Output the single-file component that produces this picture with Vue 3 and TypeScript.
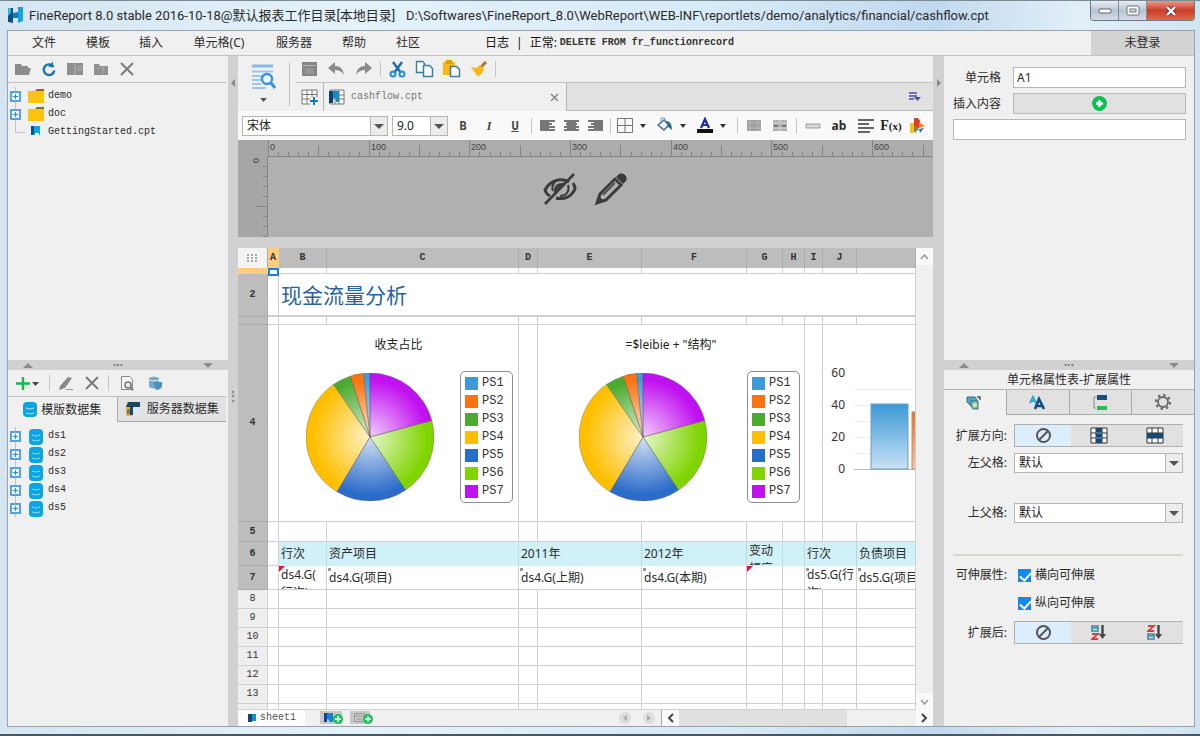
<script setup lang="ts">
import { computed, onBeforeUnmount, onMounted, ref } from 'vue'

interface Slice { name: string; color: string; from: number; to: number }

const menus: { label: string; width: number }[] = [
  { label: '文件', width: 54 },
  { label: '模板', width: 54 },
  { label: '插入', width: 52 },
  { label: '单元格(C)', width: 84 },
  { label: '服务器', width: 66 },
  { label: '帮助', width: 54 },
  { label: '社区', width: 54 },
]
const files = [
  { name: 'demo', folder: true },
  { name: 'doc', folder: true },
  { name: 'GettingStarted.cpt', folder: false },
]
const datasets = ['ds1', 'ds2', 'ds3', 'ds4', 'ds5']

const slices: Slice[] = [
  { name: 'PS1', color: '#3f9bd8', from: 354, to: 360 },
  { name: 'PS2', color: '#fd7311', from: 342, to: 354 },
  { name: 'PS3', color: '#4cab2f', from: 325, to: 342 },
  { name: 'PS4', color: '#ffbf00', from: 211, to: 325 },
  { name: 'PS5', color: '#2c6cc9', from: 146, to: 211 },
  { name: 'PS6', color: '#80d400', from: 75, to: 146 },
  { name: 'PS7', color: '#c011f0', from: 0, to: 75 },
]
function arc(s: Slice): string {
  const p = (deg: number) => {
    const a = (deg * Math.PI) / 180
    return `${(64 + 64 * Math.sin(a)).toFixed(2)} ${(64 - 64 * Math.cos(a)).toFixed(2)}`
  }
  return `M64 64L${p(s.from)}A64 64 0 0 1 ${p(s.to)}Z`
}

// The ruler carries only the ticks that fit in its current width.
const rulerEl = ref<HTMLElement | null>(null)
const rulerWidth = ref(660)
let observer: ResizeObserver | undefined
onMounted(() => {
  observer = new ResizeObserver(([entry]) => { rulerWidth.value = entry.contentRect.width })
  if (rulerEl.value) observer.observe(rulerEl.value)
})
onBeforeUnmount(() => observer?.disconnect())
const ticks = computed(() => {
  const list: { n: number; x: number; label: boolean }[] = []
  for (let n = 0; n * 1.007 < rulerWidth.value; n += 10) {
    const x = Math.round(n * 1.007)
    list.push({ n, x, label: n % 100 === 0 && x + 24 < rulerWidth.value })
  }
  return list
})
const sideTicks = Array.from({ length: 8 }, (_, i) => ({ n: (i + 1) * 10, y: (i + 1) * 10 }))
const columns = ['A', 'B', 'C', 'D', 'E', 'F', 'G', 'H', 'I', 'J', '']
const plainRows = ['8', '9', '10', '11', '12', '13', '']
const charts = [
  { title: '收支占比', span: 2, id: 'a' },
  { title: '=$leibie + "结构"', span: 4, id: 'b' },
]

const fontName = ref('宋体')
const fontSize = ref('9.0')
const cellName = ref('A1')
const cellText = ref('')
const leftParent = ref('默认')
const topParent = ref('默认')
const stretchX = ref(true)
const stretchY = ref(true)
const direction = ref(0)
const afterExpand = ref(0)
</script>

<template>
  <div class="window">
    <header class="titlebar">
      <svg class="logo" width="17" height="17" viewBox="0 0 17 17"><path d="M1 1h5v15l-5-1z" fill="#0e4f86" /><path d="M6 6l5-1v6H6z" fill="#1679bd" /><path d="M11 0h5v14l-5 2z" fill="#14a3dc" /><path d="M1 1h3v5l-3 3z" fill="#2bb5e6" /></svg>
      <h1>FineReport 8.0 stable 2016-10-18@默认报表工作目录[本地目录]</h1>
      <span class="path">D:\Softwares\FineReport_8.0\WebReport\WEB-INF\reportlets/demo/analytics/financial/cashflow.cpt</span>
      <div class="winbtns">
        <button aria-label="最小化"><svg width="14" height="8"><rect x="1" y="2" width="12" height="4" rx="1" fill="#fff" stroke="#5c6370" /></svg></button>
        <button aria-label="最大化"><svg width="14" height="12"><rect x="1" y="1" width="12" height="9" rx="1" fill="#fff" stroke="#6a7280" /><rect x="4" y="4" width="6" height="3" fill="#d5dbe4" stroke="#6a7280" /></svg></button>
        <button class="close" aria-label="关闭"><svg width="12" height="10" viewBox="0 0 12 10"><path d="M2 1l8 8M10 1L2 9" stroke="#6b3030" stroke-width="4" /><path d="M2 1l8 8M10 1L2 9" stroke="#fff" stroke-width="2.4" /></svg></button>
      </div>
    </header>

    <div class="frame">
      <nav class="menubar">
        <button v-for="m in menus" :key="m.label" :style="{ width: m.width + 'px' }">{{ m.label }}</button>
        <p class="log"><span>日志</span><span>|</span><span>正常:</span><code>DELETE FROM fr_functionrecord</code></p>
        <button class="login">未登录</button>
      </nav>

      <div class="body">
        <aside class="left">
          <section class="pane upper">
            <div class="tools">
              <button aria-label="打开"><svg width="18" height="14"><path d="M1 2h6l1 2h6v2h3l-2 7H1z" fill="#8b8b8b" /></svg></button>
              <button aria-label="刷新"><svg width="16" height="16" viewBox="0 0 16 16"><path d="M12.600 6A5.300 5.300 0 1 0 13.300 9.500" fill="none" stroke="#1a75b5" stroke-width="2.400" /><path d="M7 5.500l5-5v6z" fill="#1a75b5" /></svg></button>
              <button aria-label="新建"><svg width="18" height="14"><path d="M1 1h16v12H1z" fill="#8f8f8f" /><path d="M9 1v12M11 5h5M11 8h5" stroke="#b5b5b5" /></svg></button>
              <button aria-label="重命名"><svg width="16" height="14"><path d="M1 2h5l1 2h8v9H1z" fill="#909090" /><path d="M4 6h8M10 4v8" stroke="#aaa" /></svg></button>
              <button aria-label="删除"><svg width="14" height="14"><path d="M1 1l12 12M13 1L1 13" stroke="#7b7b7b" stroke-width="2" /></svg></button>
            </div>
            <ul class="tree">
              <li v-for="f in files" :key="f.name" :class="{ leaf: !f.folder }">
                <span class="knob"><svg v-if="f.folder" width="11" height="11"><rect x="1" y="1" width="9" height="9" fill="#e8f3fd" stroke="#58a2e2" stroke-width="2" /><path d="M3 5.500h5M5.500 3v5" stroke="#3b86cc" /></svg></span>
                <svg v-if="f.folder" width="17" height="15"><path d="M0 2h7l2-1h7v13H0z" fill="#ffc20e" /><path d="M7 2l2-2h7v2z" fill="#8a6a2c" /></svg>
                <svg v-else width="17" height="14"><path d="M3 1h9v9H3z" fill="#0fa5df" /><path d="M3 1h3v8l-3 1z" fill="#0b4d8c" /><path d="M7 8h4v3H7z" fill="#fff" /></svg>
                <span class="nm">{{ f.name }}</span>
              </li>
            </ul>
          </section>
          <div class="hsplit"><i class="up"></i><b>···</b><i class="dn"></i></div>
          <section class="pane lower">
            <div class="tools small">
              <button class="add" aria-label="添加"><svg width="26" height="15"><path d="M8 1v13M1 7.500h14" stroke="#18b84c" stroke-width="2.400" /><path d="M17 6h7l-3.500 4z" fill="#444" /></svg></button>
              <i class="sep"></i>
              <button aria-label="编辑"><svg width="16" height="15"><path d="M2 10L10 1l4 1-7 10-6 2z" fill="#8a8a8a" /><path d="M8 13.500h7" stroke="#999" /></svg></button>
              <button aria-label="删除"><svg width="14" height="14"><path d="M1 1l12 12M13 1L1 13" stroke="#7b7b7b" stroke-width="2" /></svg></button>
              <i class="sep"></i>
              <button class="wide" aria-label="预览"><svg width="15" height="16"><path d="M1.500 1.500h8l3 3v10h-11z" fill="#f6f6f6" stroke="#8a8a8a" /><circle cx="8" cy="10" r="3" fill="#eee" stroke="#777" stroke-width="1.500" /><path d="M10 12l3 3" stroke="#777" stroke-width="2" /></svg></button>
              <button aria-label="连接"><svg width="15" height="16"><path d="M1 3q5-3 10 0v9q-5 3-10 0z" fill="#78a8c8" /><path d="M1 5q5 2 10 0" stroke="#dceaf2" fill="none" /><path d="M5 7h9v5q-2 3-6 3z" fill="#4a90c4" /></svg></button>
            </div>
            <div class="dtabs">
              <button class="on"><svg width="14" height="17"><rect x="0" y="1" width="14" height="15" rx="4" fill="#0aa5e2" /><path d="M3 7q4 2 8 0M3 12q4 2 8 0" stroke="#b5e5f8" fill="none" /></svg>模版数据集</button>
              <button><svg width="18" height="16"><path d="M1 4h6v11H1z" fill="#e9b51c" /><path d="M3 1h12v5H8v8H5V6H1z" fill="#1d4766" /><path d="M9 7h6v7H9z" fill="#dce8f0" /><path d="M2 8h3v5H2z" fill="#777" /></svg>服务器数据集</button>
            </div>
            <ul class="tree ds">
              <li v-for="d in datasets" :key="d">
                <span class="knob"><svg width="11" height="11"><rect x="1" y="1" width="9" height="9" fill="#e8f3fd" stroke="#58a2e2" stroke-width="2" /><path d="M3 5.500h5M5.500 3v5" stroke="#3b86cc" /></svg></span>
                <svg width="17" height="17"><rect x="1" y="1" width="14" height="16" rx="4" fill="#0aa5e2" /><path d="M4 7q4 2 8 0M4 12q4 2 8 0" stroke="#8fdcf7" fill="none" /></svg>
                <span class="nm">{{ d }}</span>
              </li>
            </ul>
          </section>
        </aside>

        <div class="vsplit"><svg width="6" height="8"><path d="M5 0v8L1 4z" fill="#8a8a8a" /></svg><b>⋮</b></div>

        <main class="center">
          <div class="topbar">
            <button class="preview" aria-label="分页预览">
              <svg width="26" height="26"><path d="M1 2h21" stroke="#88b8e4" stroke-width="3" /><path d="M1 7.500h21M1 12h11M1 16h9M1 20h9M1 24h14" stroke="#9cc5ea" stroke-width="2" /><circle cx="16" cy="15" r="5" fill="#eaf5fe" stroke="#3a94dc" stroke-width="2.400" /><path d="M20 19l4 5" stroke="#3a94dc" stroke-width="3" /></svg>
              <svg width="9" height="6"><path d="M1 1h7L4.500 5z" fill="#555" /></svg>
            </button>
            <i class="tall"></i>
            <div class="toprows">
              <div class="icons">
                <button aria-label="保存"><svg width="17" height="16"><path d="M1 1h15v14H1z" fill="#858585" /><path d="M2 4.500h13" stroke="#b6b6b6" /><path d="M4 7h9v6H4z" fill="#959595" /></svg></button>
                <button aria-label="撤销"><svg width="17" height="14"><path d="M7 0v4q8 0 9 9-3-5-9-5v4L0 6z" fill="#8a8a8a" /></svg></button>
                <button aria-label="重做"><svg width="17" height="14"><path d="M10 0v4q-8 0-9 9 3-5 9-5v4l7-6z" fill="#8a8a8a" /></svg></button>
                <i class="sep"></i>
                <button aria-label="剪切"><svg width="17" height="17"><path d="M4 1l8 11M13 1L5 12" stroke="#1c6ea6" stroke-width="2.400" /><circle cx="4" cy="13" r="2.500" fill="none" stroke="#2a8dcc" stroke-width="2" /><circle cx="13" cy="13" r="2.500" fill="none" stroke="#2a8dcc" stroke-width="2" /></svg></button>
                <button aria-label="复制"><svg width="19" height="18"><path d="M1.500 1.500h6l2 2v9h-8z" fill="#f4f9fb" stroke="#3e7f9c" stroke-width="1.400" /><path d="M8.500 5.500h6l3 3v8h-9z" fill="#f8fcfd" stroke="#3e7f9c" stroke-width="1.500" /></svg></button>
                <button aria-label="粘贴"><svg width="19" height="18"><path d="M1 2h12v13H1z" fill="#fbb617" /><path d="M4 0h6v4H4z" fill="#e19a10" /><path d="M8.500 6.500h6l3 3v7h-9z" fill="#f8fcfd" stroke="#3e7f9c" stroke-width="1.500" /></svg></button>
                <button aria-label="格式刷"><svg width="18" height="17"><path d="M16 1l-6 6" stroke="#b0762c" stroke-width="3" /><path d="M1 6l5 1 4-3 4 4-2 4-4 4z" fill="#fbb617" /></svg></button>
                <i class="sep"></i>
              </div>
              <div class="files">
                <button class="new" aria-label="新建报表"><svg width="18" height="17"><path d="M1 1h15v14H1zM1 5.500h15M1 10h15M6 1v14M11 1v14" fill="#fff" stroke="#777" /><path d="M9 8h9v9H9z" fill="#f0f0f0" /><path d="M13 8v8M9 12h8" stroke="#0e7cb9" stroke-width="2" /></svg></button>
                <div class="ftab">
                  <svg width="16" height="16"><path d="M1 1h14v14H1zM1 6h14M1 10h14M6 1v14M10 1v14" fill="#fff" stroke="#777" /><path d="M0 2h10v11H7V9H4v5H0z" fill="#0f8ec8" /><path d="M0 2h4v12H0z" fill="#0b4272" /></svg>
                  <span>cashflow.cpt</span>
                  <button aria-label="关闭标签"><svg width="9" height="9"><path d="M1 1l7 7M8 1L1 8" stroke="#888" stroke-width="1.500" /></svg></button>
                </div>
                <div class="rest"><button aria-label="标签列表"><svg width="14" height="11"><path d="M1 1h8v2H1zM1 4h8v2H1zM1 7h5v2H1z" fill="#6e70b8" /><path d="M6 6h7l-3.500 4z" fill="#4d4fa5" /></svg></button></div>
              </div>
            </div>
          </div>

          <div class="format">
            <span class="sel font"><select v-model="fontName" aria-label="字体"><option>宋体</option></select><i></i></span>
            <span class="sel size"><select v-model="fontSize" aria-label="字号"><option>9.0</option></select><i></i></span>
            <button class="ltr" aria-label="加粗"><b>B</b></button>
            <button class="ltr it" aria-label="斜体"><b>I</b></button>
            <button class="ltr un" aria-label="下划线"><b>U</b></button>
            <i class="sep"></i>
            <button class="al" aria-label="左对齐"><svg width="17" height="14"><path d="M1 2h15M1 5h12M1 8h15M1 11h15" stroke="#777" stroke-width="2" /><path d="M1 1h9v11H1z" fill="#777" /></svg></button>
            <button class="al" aria-label="居中"><svg width="17" height="14"><path d="M1 2h15M3 5h11M1 8h15M1 11h15" stroke="#777" stroke-width="2" /><path d="M4 1h9v11H4z" fill="#777" /></svg></button>
            <button class="al" aria-label="右对齐"><svg width="17" height="14"><path d="M1 2h15M4 5h12M1 8h15M1 11h15" stroke="#777" stroke-width="2" /><path d="M7 1h9v11H7z" fill="#777" /></svg></button>
            <i class="sep"></i>
            <button class="dd" aria-label="边框"><svg width="36" height="17"><path d="M1.500 1.500h15v14h-15zM9 1.500v14M1.500 8.500h15" fill="none" stroke="#777" /><path d="M24 7h6l-3 4z" fill="#333" /></svg></button>
            <button class="dd" aria-label="背景色"><svg width="36" height="17"><path d="M2 8l6-5 5 5-5 5z" fill="#e8f1f6" stroke="#4c6d80" stroke-width="1.500" /><path d="M5 5V1h4v3" stroke="#7c98a6" fill="none" /><path d="M10 4q6 0 6 9l-4-3z" fill="#2b6a97" /><path d="M24 7h6l-3 4z" fill="#333" /></svg></button>
            <button class="dd" aria-label="字体颜色"><svg width="36" height="17"><path d="M5 11L9 2l4 9M6 8h6" fill="none" stroke="#1c2f9b" stroke-width="2.200" /><path d="M1 12h16v4H1z" fill="#111" /><path d="M24 7h6l-3 4z" fill="#333" /></svg></button>
            <i class="sep"></i>
            <button aria-label="合并"><svg width="16" height="13"><path d="M1 1h14v11H1z" fill="#a0a0a0" /><path d="M4 1v11M12 1v11M1 4h14M1 9h14" stroke="#b8b8b8" /></svg></button>
            <button aria-label="取消合并"><svg width="16" height="13"><path d="M1 1h14v11H1z" fill="#b2b2b2" /><path d="M1 4h14M1 9h14M8 1v3M8 9v3" stroke="#d5d5d5" /><path d="M2 6h4v2H2zM10 6h4v2h-4z" fill="#777" /></svg></button>
            <i class="sep"></i>
            <button aria-label="文本框"><svg width="16" height="6"><path d="M1 1h14v4H1z" fill="#d8d8d8" stroke="#a0a0a0" /></svg></button>
            <button class="ab" aria-label="文本">ab</button>
            <button aria-label="富文本"><svg width="17" height="16"><path d="M1 2h16M1 6h11M1 10h16M1 14h12" stroke="#666" stroke-width="2" /></svg></button>
            <button class="fx" aria-label="公式">F<small>(x)</small></button>
            <button aria-label="图表"><svg width="17" height="17"><path d="M1 6h4v10H1z" fill="#f6c31c" /><path d="M5 1h4l2 3v6l-6 5z" fill="#df3a2c" /><path d="M6 9l4 3-4 4z" fill="#57a93a" /><path d="M10 5l6 4-6 2z" fill="#f28a1c" /><path d="M10 12l5-1-4 5z" fill="#4664b4" /></svg></button>
          </div>

          <section class="ruler">
            <div ref="rulerEl" class="rtop"><svg width="100%" height="17">
              <g v-for="t in ticks" :key="t.n">
                <path :d="`M${t.x}.5 ${t.n % 100 === 0 ? 0 : t.n % 50 === 0 ? 5 : 12}V16`" stroke="#858585" />
                <text v-if="t.label" :x="t.x + 2" y="10">{{ t.n }}</text>
              </g>
            </svg></div>
            <div class="rside"><svg width="30" height="100%">
              <path v-for="t in sideTicks" :key="t.n" :d="`M${t.n % 50 === 0 ? 18 : 25} ${t.y - 1}.5H30`" stroke="#858585" />
              <text x="-6" y="21" transform="rotate(-90)">0</text>
            </svg></div>
            <div class="overlay">
              <svg width="34" height="34" viewBox="0 0 34 34"><path d="M26 10Q21 7 15 8 6 10 2 18q1 4 5 6M30 11q2 3 2 6-3 7-10 9-5 1-9-0" fill="none" stroke="#3b3b3b" stroke-width="3" /><path d="M12 10q-4 4-2 9M19 12l-7 7q0-7 7-7zM25 13q2 6-3 10l-5 1" fill="none" stroke="#3b3b3b" stroke-width="2" /><path d="M2 32L31 2" stroke="#3b3b3b" stroke-width="2.600" /></svg>
              <svg width="34" height="34" viewBox="0 0 34 34"><path d="M3 31l3-9L21 7l6 6-15 15z" fill="none" stroke="#3b3b3b" stroke-width="3" /><path d="M3 31l2-7 5 5z" fill="#3b3b3b" /><path d="M22 5l3-3q3-2 6 1t1 6l-3 3z" fill="#3b3b3b" /><path d="M9 23l12-12" stroke="#3b3b3b" stroke-width="1.600" /></svg>
            </div>
          </section>

          <section class="sheet">
            <table>
              <colgroup><col class="c0"><col class="ca"><col class="cb"><col class="cc"><col class="cd"><col class="ce"><col class="cf"><col class="cg"><col class="ch"><col class="ci"><col class="cj"><col></colgroup>
              <thead><tr>
                <th class="corner"><svg width="11" height="9"><path d="M1 0v9M5 0v9M9 0v9" stroke="#aaa" stroke-width="2" stroke-dasharray="2 1" /></svg></th>
                <th v-for="(c, i) in columns" :key="i" :class="{ hot: i === 0 }">{{ c }}</th>
              </tr></thead>
              <tbody>
                <tr class="r1"><th></th><td class="cur"><span></span></td><td v-for="n in 10" :key="n"></td></tr>
                <tr class="r2"><th>2</th><td></td><td colspan="10" class="headline">现金流量分析</td></tr>
                <tr class="r3"><th></th><td v-for="n in 11" :key="n"></td></tr>
                <tr class="r4">
                  <th>4</th><td></td>
                  <template v-for="c in charts" :key="c.id">
                    <td :colspan="c.span">
                      <div class="chart" :class="c.id">
                        <h3>{{ c.title }}</h3>
                        <div class="plot">
                          <svg width="128" height="128" viewBox="0 0 128 128">
                            <defs><radialGradient v-for="s in slices" :id="c.id + s.name" :key="s.name" gradientUnits="userSpaceOnUse" cx="64" cy="64" r="64"><stop offset="0" :stop-color="s.color" stop-opacity="0.200" /><stop offset="0.900" :stop-color="s.color" /></radialGradient></defs>
                            <path v-for="s in slices" :key="s.name" :d="arc(s)" :fill="`url(#${c.id}${s.name})`" stroke="#555" stroke-opacity="0.450" stroke-width="0.800" />
                          </svg>
                          <ul class="legend"><li v-for="s in slices" :key="s.name"><i :style="{ background: s.color }"></i>{{ s.name }}</li></ul>
                        </div>
                      </div>
                    </td>
                    <td v-if="c.id === 'a'"></td>
                  </template>
                  <td></td>
                  <td colspan="2"><div class="bars"><svg width="100%" height="130">
                    <path d="M31 18.500H400M31 34.500H400M31 50.500H400M31 66.500H400M31 82.500H400" stroke="#f0f0f0" />
                    <path d="M31 98.500H400" stroke="#bbb" />
                    <defs><linearGradient id="bb" x2="0" y2="1"><stop offset="0" stop-color="#3c98d6" /><stop offset="1" stop-color="#c9e2f5" /></linearGradient><linearGradient id="bo" x2="0" y2="1"><stop offset="0" stop-color="#f07020" /><stop offset="1" stop-color="#fbc29a" /></linearGradient></defs>
                    <rect x="48" y="33" width="37" height="65" fill="url(#bb)" stroke="#6d9fc4" />
                    <rect x="89" y="41" width="37" height="57" fill="url(#bo)" stroke="#c98862" />
                    <text x="22" y="6">60</text><text x="22" y="38">40</text><text x="22" y="70">20</text><text x="22" y="102">0</text>
                  </svg></div></td>
                </tr>
                <tr class="r5"><th>5</th><td v-for="n in 11" :key="n"></td></tr>
                <tr class="r6">
                  <th>6</th><td class="blank"></td><td>行次</td><td>资产项目</td><td colspan="2">2011年</td><td>2012年</td>
                  <td><div class="clip">变动幅度</div></td><td></td><td colspan="2">行次</td><td><div class="line">负债项目</div></td>
                </tr>
                <tr class="r7">
                  <th>7</th><td></td><td class="red"><div class="clip">ds4.G( 行次)</div></td><td class="mark">ds4.G(项目)</td><td colspan="2" class="mark">ds4.G(上期)</td><td class="mark">ds4.G(本期)</td>
                  <td class="red"></td><td></td><td colspan="2" class="mark"><div class="clip">ds5.G(行次)</div></td><td class="mark"><div class="line">ds5.G(项目)</div></td>
                </tr>
                <tr v-for="(r, i) in plainRows" :key="i" :class="r ? 'rn' : 'rl'"><th>{{ r }}</th><td v-for="n in 11" :key="n"></td></tr>
              </tbody>
            </table>
            <div class="vscroll">
              <button aria-label="向上滚动"><svg width="9" height="6"><path d="M1 5l3.500-4L8 5" fill="none" stroke="#999" stroke-width="1.500" /></svg></button>
              <button aria-label="向下滚动"><svg width="9" height="6"><path d="M1 1l3.500 4L8 1" fill="none" stroke="#999" stroke-width="1.500" /></svg></button>
            </div>
          </section>

          <footer class="sheets">
            <button class="stab"><svg width="10" height="10"><path d="M1 1h8v7H1z" fill="#1490cf" /><path d="M1 1h4v8H1z" fill="#0b4878" /></svg>sheet1</button>
            <button class="mini" aria-label="添加报表"><svg width="24" height="14"><path d="M0 0h22v13H0z" fill="#c8c8c8" /><path d="M4 2h9v9h-3l-2-3-4 3z" fill="#1683d0" /><path d="M4 2h3v9H4z" fill="#1440a0" /><circle cx="18" cy="8" r="5" fill="#17c257" /><path d="M18 5v6M15 8h6" stroke="#fff" stroke-width="1.600" /></svg></button>
            <button class="mini" aria-label="添加表单"><svg width="24" height="14"><path d="M0 0h20v13H0z" fill="#c8c8c8" /><path d="M4.500 2.500h10v8h-10zM4 5h11M7 8h5" fill="none" stroke="#999" /><circle cx="18" cy="8" r="5" fill="#17c257" /><path d="M18 5v6M15 8h6" stroke="#fff" stroke-width="1.600" /></svg></button>
            <span class="grow"></span>
            <button class="round" aria-label="上一个"><svg width="12" height="12"><circle cx="6" cy="6" r="6" fill="#dedede" /><path d="M8 3v6L4 6z" fill="#aaa" /></svg></button>
            <button class="round" aria-label="下一个"><svg width="12" height="12"><circle cx="6" cy="6" r="6" fill="#dedede" /><path d="M4 3v6l4-3z" fill="#aaa" /></svg></button>
            <div class="hscroll">
              <button aria-label="向左滚动"><svg width="7" height="10"><path d="M6 1L2 5l4 4" fill="none" stroke="#444" stroke-width="2" /></svg></button>
              <span class="track"><i></i></span>
              <button aria-label="向右滚动"><svg width="7" height="10"><path d="M1 1l4 4-4 4" fill="none" stroke="#444" stroke-width="2" /></svg></button>
            </div>
          </footer>
        </main>

        <div class="vsplit"><svg width="6" height="8"><path d="M1 0v8l4-4z" fill="#8a8a8a" /></svg></div>

        <aside class="right">
          <section class="pane upper cell">
            <label for="cn">单元格</label><input id="cn" v-model="cellName">
            <label for="ins">插入内容</label>
            <button id="ins" class="insert"><svg width="15" height="15"><circle cx="7.500" cy="7.500" r="7.500" fill="#0fbf55" /><path d="M7.500 4v7M4 7.500h7" stroke="#fff" stroke-width="2.400" /></svg></button>
            <input v-model="cellText" class="full" aria-label="单元格内容">
          </section>
          <div class="hsplit"><i class="up"></i><b>···</b><i class="dn"></i></div>
          <section class="pane lower">
            <h2>单元格属性表-扩展属性</h2>
            <div class="ptabs">
              <button class="on" aria-label="扩展属性"><svg width="17" height="16"><path d="M1 2h8l2 3v6H5L1 7z" fill="#5ba3b5" stroke="#2d7389" /><path d="M5 6h7v8H7l-2-3z" fill="#7cc0cf" stroke="#2d7389" /><circle cx="9" cy="10" r="2" fill="#f8e46a" /><path d="M11 2h3v3" stroke="#555" stroke-width="1.500" fill="none" /></svg></button>
              <button aria-label="单元格样式"><svg width="17" height="15"><path d="M1 8l3-6 3 6M2 6h4" fill="none" stroke="#2da9d8" stroke-width="2" /><path d="M6 14l4-10 5 10M8 11h6" fill="none" stroke="#0f4d80" stroke-width="2.600" /></svg></button>
              <button aria-label="单元格元素"><svg width="17" height="17"><path d="M5 1h10v5H5z" fill="#164f7e" /><path d="M5 12h10v4H5z" fill="#22bd55" /><path d="M5 3H2v11h2" fill="none" stroke="#888" /></svg></button>
              <button aria-label="其他属性"><svg width="18" height="18" viewBox="0 0 18 18"><circle cx="9" cy="9" r="5" fill="none" stroke="#666" stroke-width="1.800" /><circle cx="9" cy="9" r="7" fill="none" stroke="#666" stroke-width="2.200" stroke-dasharray="2.400 3.100" /></svg></button>
            </div>
            <div class="props">
              <div class="prow first"><span class="lb">扩展方向:</span><div class="seg">
                <button :class="{ on: direction === 0 }" aria-label="不扩展" @click="direction = 0"><svg width="17" height="17"><circle cx="8.500" cy="8.500" r="6.500" fill="none" stroke="#555" stroke-width="2" /><path d="M4 13l9-9" stroke="#555" stroke-width="2" /></svg></button>
                <button :class="{ on: direction === 1 }" aria-label="纵向" @click="direction = 1"><svg width="18" height="17"><path d="M1 1h16v15H1zM1 6h16M1 11h16M6 1v15M12 1v15" fill="#fff" stroke="#333" /><path d="M6 1h6v15H6z" fill="#164a73" /><path d="M6 6h6M6 11h6" stroke="#6f9cc0" /></svg></button>
                <button :class="{ on: direction === 2 }" aria-label="横向" @click="direction = 2"><svg width="18" height="17"><path d="M1 1h16v15H1zM1 6h16M1 11h16M6 1v15M12 1v15" fill="#fff" stroke="#333" /><path d="M1 6h16v5H1z" fill="#164a73" /></svg></button>
              </div></div>
              <div class="prow"><label class="lb" for="lp">左父格:</label><span class="sel par"><select id="lp" v-model="leftParent"><option>默认</option></select><i></i></span></div>
              <div class="prow gap"><label class="lb" for="tp">上父格:</label><span class="sel par"><select id="tp" v-model="topParent"><option>默认</option></select><i></i></span></div>
              <hr>
              <div class="prow chk"><span class="lb">可伸展性:</span><label><input v-model="stretchX" type="checkbox">横向可伸展</label></div>
              <div class="prow chk"><span class="lb"></span><label><input v-model="stretchY" type="checkbox">纵向可伸展</label></div>
              <div class="prow last"><span class="lb">扩展后:</span><div class="seg">
                <button :class="{ on: afterExpand === 0 }" aria-label="不排序" @click="afterExpand = 0"><svg width="17" height="17"><circle cx="8.500" cy="8.500" r="6.500" fill="none" stroke="#555" stroke-width="2" /><path d="M4 13l9-9" stroke="#555" stroke-width="2" /></svg></button>
                <button :class="{ on: afterExpand === 1 }" aria-label="升序" @click="afterExpand = 1"><svg width="16" height="17"><path d="M1 2h6v5H1zM1 4h6" fill="none" stroke="#3a86a0" stroke-width="1.500" /><path d="M1 10h6l-6 5h6" fill="none" stroke="#d34040" stroke-width="1.800" /><path d="M11.500 1v10" stroke="#444" stroke-width="2.400" /><path d="M8 10h7l-3.500 5z" fill="#444" /></svg></button>
                <button :class="{ on: afterExpand === 2 }" aria-label="降序" @click="afterExpand = 2"><svg width="16" height="17"><path d="M1 2h6L1 7h6" fill="none" stroke="#d34040" stroke-width="1.800" /><path d="M1 10h6v5H1zM1 12h6" fill="none" stroke="#3a86a0" stroke-width="1.500" /><path d="M11.500 1v10" stroke="#444" stroke-width="2.400" /><path d="M8 10h7l-3.500 5z" fill="#444" /></svg></button>
              </div></div>
            </div>
          </section>
        </aside>
      </div>
    </div>
  </div>
</template>

<style>
html, body { margin: 0; }
</style>

<style scoped>
* { box-sizing: border-box; }
.window { height: 100vh; min-height: 700px; display: flex; flex-direction: column; padding: 0 5px 7px 7px; background: linear-gradient(90deg, #d5e6f2 0, #e4f2fa 30%, #d7eaf8 60%, #c0d9ef 78%, #e2eff8 90%, #cfe4f2 100%); border-top: 1px solid #7c8b92; border-bottom: 2px solid #4c5560; font: 12px/18px "Noto Sans", "Noto Sans CJK SC", sans-serif; color: #2b2b2b; overflow: hidden; }
button { font: inherit; color: inherit; border: 0; background: none; padding: 0; display: flex; align-items: center; justify-content: center; flex: none; white-space: nowrap; }
svg { display: block; flex: none; }
ul, h1, h2, h3, p { margin: 0; padding: 0; list-style: none; font-weight: 400; font-size: 12px; }
input, select { font: inherit; color: inherit; margin: 0; }
.titlebar { height: 29px; flex: none; display: flex; align-items: center; white-space: nowrap; font-family: Roboto, "Noto Sans CJK SC", sans-serif; }
.titlebar h1 { width: 382px; padding-left: 5px; font-size: 13px; }
.titlebar .path { flex: 1; min-width: 0; font-size: 13px; overflow: hidden; }
.titlebar .winbtns { display: flex; align-self: flex-start; height: 20px; border: 1px solid #6e7785; border-top: 0; border-radius: 0 0 4px 4px; overflow: hidden; }
.winbtns button { width: 28px; background: linear-gradient(#e9eef4, #b9c4d2 50%, #d3dce7); border-right: 1px solid #7f8998; }
.winbtns button.close { width: 47px; border: 0; background: linear-gradient(#e49a8c, #cc3d25 50%, #de6a50); }
.frame { flex: 1; min-height: 0; display: flex; flex-direction: column; border: 1px solid #98a2aa; background: #f0f0f0; }
.menubar { height: 25px; flex: none; display: flex; align-items: center; padding-left: 9px; border-bottom: 1px solid #c3c3c3; }
.menubar .log { flex: 1; display: flex; margin-left: 50px; white-space: nowrap; color: #111; }
.log span { margin-right: 7px; }
.log span + span + span { margin-right: 3px; }
code, .nm, .ftab span, .stab { font-family: "Liberation Mono", monospace; font-size: 10px; }
code { font-weight: 700; color: #333; }
.menubar .login { width: 103px; height: 24px; background: #d3d3d3; }
.body { flex: 1; min-height: 0; display: grid; grid-template-columns: 220px 10px minmax(0, 1fr) 11px 250px; }
.left, .right, .center { display: flex; flex-direction: column; min-height: 0; min-width: 0; }
.pane { background: #f0f0f0; overflow: hidden; }
.pane.upper { height: 304px; flex: none; }
.pane.lower { flex: 1; min-height: 0; }
.hsplit { height: 10px; flex: none; display: flex; align-items: center; justify-content: space-between; padding: 0 15px; background: #d1d1d1; color: #777; line-height: 10px; }
.hsplit i { width: 0; border: 5px solid transparent; }
.hsplit i.up { border-top: 0; border-bottom-color: #8d8d8d; }
.hsplit i.dn { border-bottom: 0; border-top-color: #8d8d8d; }
.vsplit { background: #d1d1d1; display: flex; flex-direction: column; align-items: center; padding-top: 23px; color: #888; }
.vsplit b { margin-top: 301px; line-height: 16px; }
.tools { height: 27px; display: flex; align-items: center; padding: 0 0 0 2px; border-bottom: 1px solid #bdbdbd; margin-right: 2px; }
.tools button { width: 26px; height: 24px; }
.tools.small button.add { width: 36px; }
.tools.small button.wide { width: 30px; }
.sep { width: 1px; height: 16px; margin: 0 3px; background: #c6c6c6; flex: none; }
.tree { padding: 4px 0 0 2px; }
.tree li { height: 18px; display: flex; align-items: center; position: relative; }
.tree .knob { width: 18px; height: 18px; display: flex; align-items: center; position: relative; background: linear-gradient(#c5c5c5, #c5c5c5) 5px 0 / 1px 100% no-repeat; }
.tree .leaf .knob { background: linear-gradient(#c5c5c5, #c5c5c5) 5px 0 / 1px 9px no-repeat, linear-gradient(#c5c5c5, #c5c5c5) 5px 9px / 10px 1px no-repeat; }
.tree .nm { margin-left: 3px; }
.tree.ds { padding-top: 5px; }
.dtabs { display: flex; height: 25px; margin-right: 2px; }
.dtabs button { flex: 1; gap: 4px; background: #e2e2e2; border-left: 1px solid #aaa; border-bottom: 1px solid #aaa; }
.dtabs button.on { background: none; border: 0; }

.topbar { height: 55px; flex: none; display: flex; }
.preview { width: 51px; flex-direction: column; gap: 7px; }
.tall { width: 1px; margin: 7px 6px 5px 0; background: #c0c0c0; }
.toprows { flex: 1; min-width: 0; }
.icons { height: 27px; display: flex; align-items: center; border-bottom: 1px solid #bdbdbd; }
.icons button { width: 27px; height: 24px; }
.files { height: 28px; display: flex; }
.files .new { width: 28px; border-right: 1px solid #b5b5b5; }
.ftab { width: 243px; display: flex; align-items: center; padding: 0 7px 0 5px; gap: 6px; border-right: 1px solid #b5b5b5; color: #777; }
.ftab span { flex: 1; }
.rest { flex: 1; background: #e1e1e1; display: flex; justify-content: flex-end; align-items: center; padding-right: 11px; border-bottom: 1px solid #bbb; }
.format { height: 29px; flex: none; display: flex; align-items: center; padding-left: 4px; background: #f9f9f9; overflow: hidden; }
.format button { width: 26px; height: 24px; }
.format button.al { width: 24px; }
.format button.dd { width: 40px; }
.format .ltr { font: 12px/16px "DejaVu Sans Mono", monospace; color: #444; }
.format .it { font-style: italic; font-family: "Liberation Serif", serif; }
.format .un { text-decoration: underline; }
.format .ab { font-weight: 700; }
.format .fx { font: 700 14px/16px "Liberation Serif", serif; color: #222; }
.format .fx small { font-size: 11px; }
.sel { display: flex; position: relative; height: 20px; border: 1px solid #b5b5b5; background: #fff; flex: none; }
.sel select { appearance: none; border: 0; background: none; flex: 1; width: 100%; padding: 0 20px 0 4px; height: 18px; line-height: 16px; border-radius: 0; color: #222; }
.sel i { position: absolute; right: 0; top: 0; width: 17px; height: 18px; background: #ececec; border-left: 1px solid #b5b5b5; pointer-events: none; }
.sel i::after { content: ""; position: absolute; left: 3px; top: 7px; border: 5px solid transparent; border-bottom: 0; border-top-color: #555; }
.sel.font { width: 146px; margin-right: 4px; }
.sel.size { width: 56px; margin-right: 2px; }

.ruler { height: 97px; flex: none; position: relative; display: grid; grid-template: 17px 1fr / 30px 1fr; background: #b0b0b0; overflow: hidden; }
.ruler text { font: 9px "Liberation Sans", sans-serif; fill: #444; }
.ruler::before { content: ""; background: #a6a6a6; }
.rtop { border-bottom: 1px solid #858585; overflow: hidden; background: #acacac; }
.rside { background: #a6a6a6; border-right: 1px solid #858585; overflow: hidden; }
.overlay { position: absolute; inset: 0; display: flex; align-items: center; justify-content: center; gap: 17px; }
.sheet { flex: 1; min-height: 0; display: flex; border-top: 11px solid #d1d1d1; box-sizing: border-box; background: #fff; overflow: hidden; }
table { table-layout: fixed; width: 0; flex: 1; height: 100%; border-collapse: separate; border-spacing: 0; }
.c0 { width: 30px; } .ca { width: 11px; } .cb { width: 48px; } .cc { width: 192px; } .cd { width: 19px; } .ce { width: 104px; } .cf { width: 105px; } .cg { width: 36px; } .ch { width: 22px; } .ci { width: 18px; } .cj { width: 34px; }
th, td { padding: 0; border-right: 1px solid #d0d0d0; border-bottom: 1px solid #d0d0d0; font-weight: 400; text-align: left; overflow: hidden; white-space: nowrap; }
th { text-align: center; font: 700 10px/12px "Liberation Mono", monospace; background: #bdbdbd; border-color: #adadad; color: #333; }
thead th { height: 20px; border-bottom: 0; }
thead th.corner { background: #f4f4f4; }
.corner svg { margin: 0 auto; }
thead th.hot, .r1 th { background: #ffcd7c; border-color: #ffcd7c; }
.r1 { height: 6px; } .r2 { height: 43px; } .r3 { height: 8px; } .r4 { height: 197px; } .r5 { height: 20px; } .r6, .r7 { height: 24px; } .rn { height: 19px; }
.r1 td, .r1 th { line-height: 0; }
.r2 td { border-bottom: 2px solid #cfcfcf; }
td.cur { position: relative; overflow: visible; }
.cur span { position: absolute; left: 0; top: 0; width: 11px; height: 8px; border: 2px solid #1c7fe0; background: #fff; z-index: 1; }
td.headline { font-size: 21px; line-height: 40px; color: #2a6399; padding-left: 2px; }
.r6 td { background: #d0f1f8; border-color: #d0f1f8; border-right-color: #b9d9e0; padding-left: 2px; }
.r6 td.blank { background: #fff; border-color: #d0d0d0; }
.r7 td { padding-left: 2px; position: relative; }
.r7 .red::before { content: ""; position: absolute; left: 0; top: 0; border: 3px solid #e0103c; border-right-color: transparent; border-bottom-color: transparent; }
.r7 .mark::before { content: ""; position: absolute; left: 1px; top: 2px; width: 3px; height: 3px; background: #999; }
.clip { height: 23px; line-height: 18px; overflow: hidden; white-space: normal; width: 100%; }
.r6 .clip { width: 28px; }
.line { overflow: hidden; }
.rn th, .rl th { background: #eeeeee; border-color: #d0d0d0; font-weight: 400; }
.chart { height: 196px; padding-top: 11px; }
.chart h3 { text-align: center; line-height: 18px; color: #222; }
.plot { display: flex; align-items: center; margin-top: 17px; padding-left: 27px; gap: 26px; }
.chart.b .plot { padding-left: 41px; gap: 40px; }
.legend { border: 1px solid #8e8e8e; border-radius: 5px; width: 53px; padding: 2px 0 2px 4px; }
.legend li { height: 18px; display: flex; align-items: center; gap: 4px; font: 12px/18px "Liberation Mono", monospace; color: #333; }
.legend i { width: 13px; height: 13px; }
.bars { height: 196px; padding-top: 46px; overflow: hidden; }
.bars text { font: 12px "Noto Sans", sans-serif; fill: #333; text-anchor: end; }
.bars svg { overflow: visible; }
.vscroll { width: 17px; flex: none; background: #f0f0f0; display: flex; flex-direction: column; justify-content: space-between; }
.vscroll button { height: 17px; background: #fafafa; }
.sheets { height: 16px; flex: none; display: flex; align-items: center; background: #f0f0f0; }
.stab { width: 67px; height: 16px; gap: 3px; background: #fdfdfd; color: #555; margin-right: 12px; }
.mini { width: 30px; }
.grow { flex: 1; }
.round { width: 24px; }
.hscroll { width: 272px; height: 16px; display: flex; align-items: stretch; border-left: 1px solid #aaa; }
.hscroll button { width: 17px; background: #fafafa; }
.hscroll .track { flex: 1; display: flex; }
.hscroll .track i { width: 71%; background: #e0e0e0; }

.cell { display: grid; grid-template-columns: 48px 1fr; gap: 5px 12px; align-content: start; padding: 11px 8px 0 9px; }
.cell label { text-align: right; line-height: 21px; }
.cell input { height: 21px; border: 1px solid #b8b8b8; background: #fff; padding: 0 3px; width: 100%; min-width: 0; }
.cell .full { grid-column: 1 / 3; }
.insert { height: 21px; background: #e1e1e1; border: 1px solid #b8b8b8; }
.right h2 { height: 20px; line-height: 20px; text-align: center; border-bottom: 1px solid #b5b5b5; }
.ptabs { display: flex; height: 25px; }
.ptabs button { flex: 1; background: #e1e1e1; border-left: 1px solid #aaa; border-bottom: 1px solid #aaa; }
.ptabs button.on { background: none; border: 0; }
.props { padding: 9px 11px 0 9px; }
.prow { display: flex; align-items: center; min-height: 20px; margin-bottom: 6px; }
.prow.gap { margin: 30px 0 0; }
.prow .lb { width: 54px; margin-right: 7px; text-align: right; white-space: nowrap; flex: none; line-height: 20px; }
.sel.par { flex: 1; }
.seg { flex: 1; display: flex; height: 23px; border: 1px solid #b0b0b0; border-right: 0; background: #e1e1e1; }
.seg button { flex: 1; }
.seg button.on { background: #dcedfb; }
hr { border: 0; height: 2px; background: #d9d9cb; margin: 31px 0 9px; }
.prow.chk { margin-bottom: 8px; }
.chk label { display: flex; align-items: center; gap: 4px; padding-left: 4px; }
.chk input { appearance: none; width: 13px; height: 13px; background: #1489e6; position: relative; }
.chk input:checked::after { content: ""; position: absolute; left: 4px; top: 1px; width: 5px; height: 9px; border: solid #fff; border-width: 0 2px 2px 0; transform: rotate(42deg); }
</style>
